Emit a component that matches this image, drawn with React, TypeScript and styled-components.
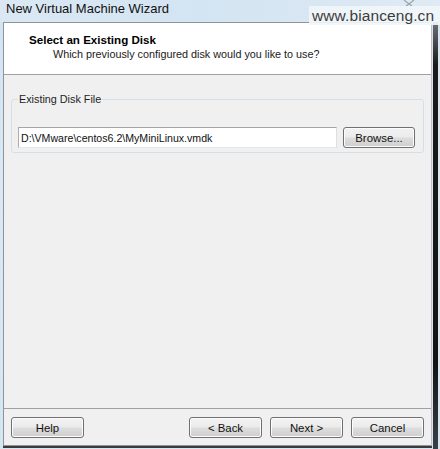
import React from 'react'
import styled, { createGlobalStyle } from 'styled-components'

const Global = createGlobalStyle`
  html, body {
    margin: 0;
    padding: 0;
    background: #dce9f4;
  }
  * {
    box-sizing: border-box;
  }
`

const Page = styled.div`
  position: relative;
  width: 440px;
  height: 449px;
  overflow: hidden;
  display: flex;
  flex-direction: column;
  font-family: "Liberation Sans", Arial, sans-serif;
  color: #1e1e1e;
  background: linear-gradient(180deg, #d3e3f0 0%, #dbe8f3 40%, #d6e6f1 100%);
`

const TitleBar = styled.div`
  height: 22px;
  flex: none;
  padding: 1px 0 0 6px;
  font-size: 13px;
  line-height: 16px;
  color: #111;
  background: linear-gradient(90deg, #dbe8f4 0%, #d3e4f2 45%, #dfeaf4 100%);
`

const Watermark = styled.div`
  position: absolute;
  top: 6px;
  left: 309px;
  width: 131px;
  height: 19px;
  padding-left: 3px;
  font-size: 15.5px;
  line-height: 19px;
  letter-spacing: 0.1px;
  color: #3c3c3c;
  background: rgba(240, 245, 249, 0.92);
`

const CloseHint = styled.svg`
  position: absolute;
  top: 0;
  left: 402px;
`

const Row = styled.div`
  flex: 1;
  display: flex;
  min-height: 0;
`

const Dialog = styled.div`
  margin-left: 3px;
  width: 429px;
  height: 424px;
  display: flex;
  flex-direction: column;
  border: 1px solid #8c959d;
  border-right-color: #b9c1c8;
  background: #f0f0f0;
  box-shadow: 0 2px 0 #3a3a3a;
`

const DarkEdge = styled.div`
  width: 5px;
  height: 100%;
  margin-left: 1px;
  background: linear-gradient(180deg, #6f7276 0%, #1b1b1b 10%, #141414 80%, #3c4045 100%);
`

const Header = styled.div`
  height: 52px;
  flex: none;
  background: #ffffff;
  border-bottom: 1px solid #a0a0a0;
  padding: 9px 0 0 25px;
`

const HeaderTitle = styled.div`
  font-size: 11.6px;
  font-weight: bold;
  line-height: 15px;
  color: #000;
`

const HeaderSub = styled.div`
  margin-top: 0;
  padding-left: 24px;
  font-size: 10.8px;
  line-height: 15px;
  color: #1a1a1a;
`

const Content = styled.div`
  flex: 1;
  padding: 17px 7px 0 7px;
`

const Group = styled.fieldset`
  margin: 0;
  padding: 21px 8px 4px 6px;
  border: 1px solid #d5dfe5;
  border-radius: 3px;
  display: flex;
  align-items: center;
  gap: 6px;
`

const Legend = styled.legend`
  padding: 0 1px;
  margin-left: 0;
  font-size: 10.8px;
  line-height: 14px;
  color: #1e1e1e;
`

const PathField = styled.div`
  flex: 1;
  height: 21px;
  padding: 0 2px;
  display: flex;
  align-items: center;
  font-size: 10.6px;
  color: #111;
  background: #fff;
  border: 1px solid #abadb3;
  border-top-color: #a2a5ab;
  border-right-color: #dbdfe6;
  border-bottom-color: #e3e9ef;
`

const Button = styled.button<{ $width?: number }>`
  width: ${p => p.$width ?? 73}px;
  height: 21px;
  padding: 0;
  font-family: inherit;
  font-size: 11.4px;
  color: #111;
  border: 1px solid #707070;
  border-radius: 3px;
  background: linear-gradient(180deg, #f2f2f2 0%, #ebebeb 48%, #dddddd 52%, #cfcfcf 100%);
  box-shadow: inset 0 0 0 1px #fcfcfc;
`

const Footer = styled.div`
  height: 37px;
  flex: none;
  border-top: 1px solid #a0a0a0;
  padding: 8px 7px 0 7px;
  display: flex;
  gap: 8px;
`

const Spacer = styled.div`
  flex: 1;
`

export default function App() {
  return (
    <Page>
      <Global />
      <TitleBar>New Virtual Machine Wizard</TitleBar>
      <CloseHint width="14" height="6" viewBox="0 0 14 6">
        <path d="M2 0 L7 4 L12 0 M4 6 L7 4 L10 6" stroke="#9aa3ab" strokeWidth="1.2" fill="none" />
      </CloseHint>
      <Watermark>www.bianceng.cn</Watermark>
      <Row>
        <Dialog>
          <Header>
            <HeaderTitle>Select an Existing Disk</HeaderTitle>
            <HeaderSub>Which previously configured disk would you like to use?</HeaderSub>
          </Header>
          <Content>
            <Group>
              <Legend>Existing Disk File</Legend>
              <PathField>D:\VMware\centos6.2\MyMiniLinux.vmdk</PathField>
              <Button $width={72}>Browse...</Button>
            </Group>
          </Content>
          <Footer>
            <Button>Help</Button>
            <Spacer />
            <Button>&lt; Back</Button>
            <Button>Next &gt;</Button>
            <Button>Cancel</Button>
          </Footer>
        </Dialog>
        <DarkEdge />
      </Row>
    </Page>
  )
}
